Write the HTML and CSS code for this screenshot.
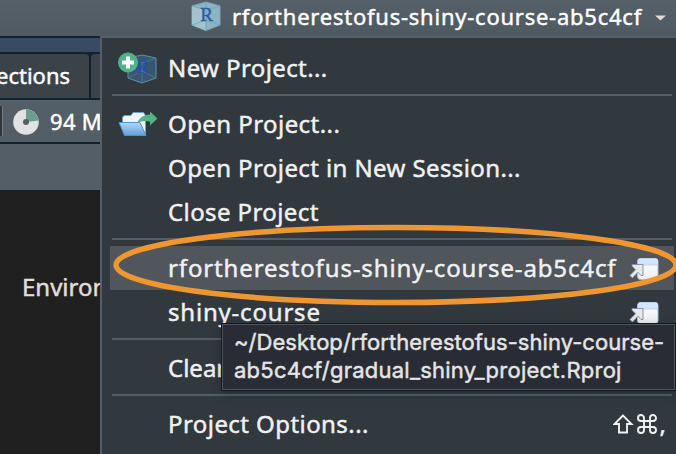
FILE: index.html
```html
<!DOCTYPE html>
<html lang="en">
<head>
<meta charset="utf-8">
<title>Project menu</title>
<link rel="stylesheet" href="styles.css">
</head>
<body>
<svg class="defs" aria-hidden="true">
  <defs>
    <linearGradient id="folder" x1="0" y1="0" x2="0" y2="1"><stop offset="0" stop-color="#b4d8f8"/><stop offset="1" stop-color="#5e9fdc"/></linearGradient>
    <linearGradient id="page" x1="0" y1="0" x2="0" y2="1"><stop offset="0" stop-color="#fff"/><stop offset="1" stop-color="#eceef2"/></linearGradient>
    <symbol id="new-window" viewBox="0 0 30 24">
      <rect x="8.500" y="1.500" width="20.500" height="21" rx="3" fill="url(#page)" stroke="#a9c0de"/>
      <path d="M9 8V4q0-2.500 2.500-2.500h15Q29 1.500 29 4v4z" fill="#d3e5fc"/>
      <path d="M9 8h20" stroke="#b4cdec" stroke-width=".8"/>
      <path d="M0.800 18.500L6.500 12.800 3 9.200V7.500h11V18.500H12L9 15.300 3.500 21z" fill="#e6e9ed" stroke="#7e8b98" stroke-width=".9"/>
    </symbol>
  </defs>
</svg>
<div class="window">
  <header class="topbar">
    <svg class="cube" viewBox="0 0 30 30">
      <path d="M15 1L29 5V24L15 29.500 1 24V5z" fill="#8db3c4" stroke="#78abc0"/>
      <path d="M1 5l14 4v20.500L1 24z" fill="#a5c3cf"/>
      <path d="M1 5l14 4 14-4M15 9v20M1 24l14-5 14 5M15 1v18" fill="none" stroke="#68a7b4" stroke-width=".8"/>
      <text x="15.500" y="19.500" class="cube-letter">R</text>
    </svg>
    <span class="project-name">rfortherestofus-shiny-course-ab5c4cf</span>
    <svg class="caret" viewBox="0 0 12 6"><path d="M0 0.500h11L5.500 5.500z" fill="#ddddd5"/></svg>
  </header>
  <main class="workspace">
    <section class="pane">
      <div class="pane-title"></div>
      <div class="tabs"><span class="tab connections">ections</span><span class="tab"></span></div>
      <div class="toolbar">
        <span class="divider"></span>
        <svg class="memory" viewBox="0 0 26 26"><circle cx="13" cy="13" r="12.800" fill="#e2e2e2"/><path d="M13 13V0.200A12.800 12.800 0 0 1 25.700 11.500z" fill="#6d9b8e"/><circle cx="13" cy="13" r="3" fill="#535e67"/></svg>
        <span class="memory-size">94 MiB</span>
      </div>
      <div class="subbar"></div>
      <div class="content">Environment</div>
    </section>
    <nav class="menu">
      <div class="item">
        <span class="icon"><svg class="new-icon" viewBox="0 0 40 34">
          <path d="M24 4l14 3v20l-14 5-14-5V7z" fill="#3a566e" stroke="#5e92a7"/>
          <path d="M10 7l14 5 14-5M24 12v20M10 27l14-7 14 7" fill="none" stroke="#4f8298" stroke-width=".7"/>
          <text x="24.500" y="22" class="cube-letter dark">R</text>
          <circle cx="10" cy="11.500" r="10" fill="#50b28b"/>
          <path d="M10 5.500v12M4 11.500h12" stroke="#fff" stroke-width="4"/>
        </svg></span>
        <span class="label new">New Project...</span>
      </div>
      <div class="separator"></div>
      <div class="item">
        <span class="icon"><svg class="open-icon" viewBox="0 0 40 26">
          <path d="M4.500 12V6.500L6 4.500h7l2-3h10.500l2 3V24H9z" fill="#f1f4f4" stroke="#5ba3dc" stroke-width=".9"/>
          <path d="M1 11.500h21l6 13H6.500z" fill="url(#folder)" stroke="#4d91d1"/>
          <path d="M19 12.500q3-8.500 13-9V.5l7.500 7-7.500 7v-4Q24 9 19 12.500z" fill="#52b38b"/>
        </svg></span>
        <span class="label open">Open Project...</span>
      </div>
      <div class="item"><span class="icon"></span><span class="label session">Open Project in New Session...</span></div>
      <div class="item"><span class="icon"></span><span class="label close">Close Project</span></div>
      <div class="separator"></div>
      <div class="item selected"><span class="icon"></span><span class="label course">rfortherestofus-shiny-course-ab5c4cf</span><svg class="window-icon"><use href="#new-window"/></svg></div>
      <div class="item"><span class="icon"></span><span class="label shiny">shiny-course</span><svg class="window-icon"><use href="#new-window"/></svg></div>
      <div class="separator"></div>
      <div class="item"><span class="icon"></span><span class="label clear">Clear Project List</span></div>
      <div class="separator"></div>
      <div class="item"><span class="icon"></span><span class="label options">Project Options...</span>
        <span class="shortcut"><svg class="keys" viewBox="0 0 44 20"><path d="M10 1.500L1.500 10H6v8.500h8V10h4.500z"/><path d="M31 7V4a3 3 0 1 0-3 3h12a3 3 0 1 0-3-3v12a3 3 0 1 0 3-3H28a3 3 0 1 0 3 3z"/></svg>,</span></div>
    </nav>
  </main>
  <svg class="highlight" viewBox="0 0 676 454"><ellipse cx="396" cy="265" rx="280" ry="37.500"/></svg>
  <div class="tooltip"><span class="tip-first">~/Desktop/rfortherestofus-shiny-course-</span><br><span class="tip-second">ab5c4cf/gradual_shiny_project.Rproj</span></div>
</div>
</body>
</html>
```
FILE: styles.css
```css
* { box-sizing: border-box; }
body { margin: 0; background: #202020; }
.defs { position: absolute; width: 0; height: 0; }
.window { position: relative; width: 676px; height: 454px; overflow: hidden; font: 24px/44px "Noto Sans", sans-serif; color: #f1f1f1; white-space: nowrap; -webkit-text-stroke: 0.45px currentColor; }
.topbar { height: 36px; display: flex; align-items: center; padding: 0 10px 4px 191px; background: linear-gradient(#556069, #4e5962); color: #fff; }
.cube { width: 30px; height: 30px; flex: none; }
.cube-letter { font: 19px "Liberation Serif", serif; fill: #2f57a3; stroke: #2f57a3; stroke-width: 0.4; text-anchor: middle; -webkit-text-stroke: 0; }
.dark { fill: #2450b8; stroke: #2450b8; }
.project-name { width: 411px; margin-left: 11px; font-size: 22px; letter-spacing: 0.76px; }
.caret { width: 12px; height: 6px; margin: 4px 0 0 13px; flex: none; }
.workspace { display: flex; height: 418px; }
.pane { width: 100px; flex: none; overflow: hidden; }
.pane-title { height: 18px; background: #3a4a62; border: solid #102130; border-width: 2px 0; }
.tabs { height: 46px; display: flex; gap: 2px; background: #102130; border-bottom: 2px solid #102130; }
.tab { width: 30px; flex: none; background: #3b4349; border-radius: 0 4px 0 0; line-height: 42px; font-size: 22px; color: #fff; }
.tab:last-child { border-radius: 4px 0 0; }
.connections { width: 89px; text-indent: -4px; }
.toolbar { height: 44px; display: flex; align-items: center; background: #535e67; border-bottom: 2px solid #102130; color: #fff; font-size: 22px; }
.divider { width: 3px; height: 30px; flex: none; background: #30373c; border-right: 1px solid #747d83; }
.memory { width: 26px; height: 26px; margin: 2px 11px 0 10px; flex: none; }
.memory-size { letter-spacing: 0.3px; }
.subbar { height: 48px; background: #535e67; border-bottom: 2px solid #102130; }
.content { padding: 73px 0 0 22px; color: #e2dfda; }
.menu { width: 576px; flex: none; padding: 8px 2px 0 8px; border: solid #535e68; border-width: 2px 0 0 2px; background: #31393f; }
.item { height: 44px; display: flex; align-items: center; }
.selected { background: #50565b; }
.icon { width: 58px; padding-left: 8px; flex: none; display: flex; }
.new, .session, .close { letter-spacing: 0.4px; }
.open, .options { letter-spacing: 0.43px; }
.course { letter-spacing: 0.86px; }
.shiny { letter-spacing: 0.8px; }
.new-icon { width: 40px; height: 34px; }
.open-icon { width: 40px; height: 26px; }
.separator { height: 2px; margin: 4px 2px 6px; background: #535e68; }
.window-icon { width: 30px; height: 24px; margin: 2px 15px 0 auto; flex: none; }
.shortcut { display: flex; align-items: center; margin: 0 8px 0 auto; }
.keys { width: 44px; height: 20px; margin-right: 3px; fill: none; stroke: #f1f1f1; stroke-width: 1.900; }
.highlight { position: absolute; inset: 0; width: 676px; height: 454px; fill: none; stroke: #ef9631; stroke-width: 5.500; pointer-events: none; }
.tooltip { position: absolute; left: 221px; top: 323px; width: 455px; height: 68px; padding: 4px 0 0 12px; border: 1px solid #15181b; box-shadow: inset 0 0 0 1px #515559, 0 3px 12px #0003; background: #292c35; font: 22px/28px Inter, sans-serif; color: #e5e5e5; }
.tip-first { letter-spacing: 0.04px; }
.tip-second { letter-spacing: 0.24px; }
```
